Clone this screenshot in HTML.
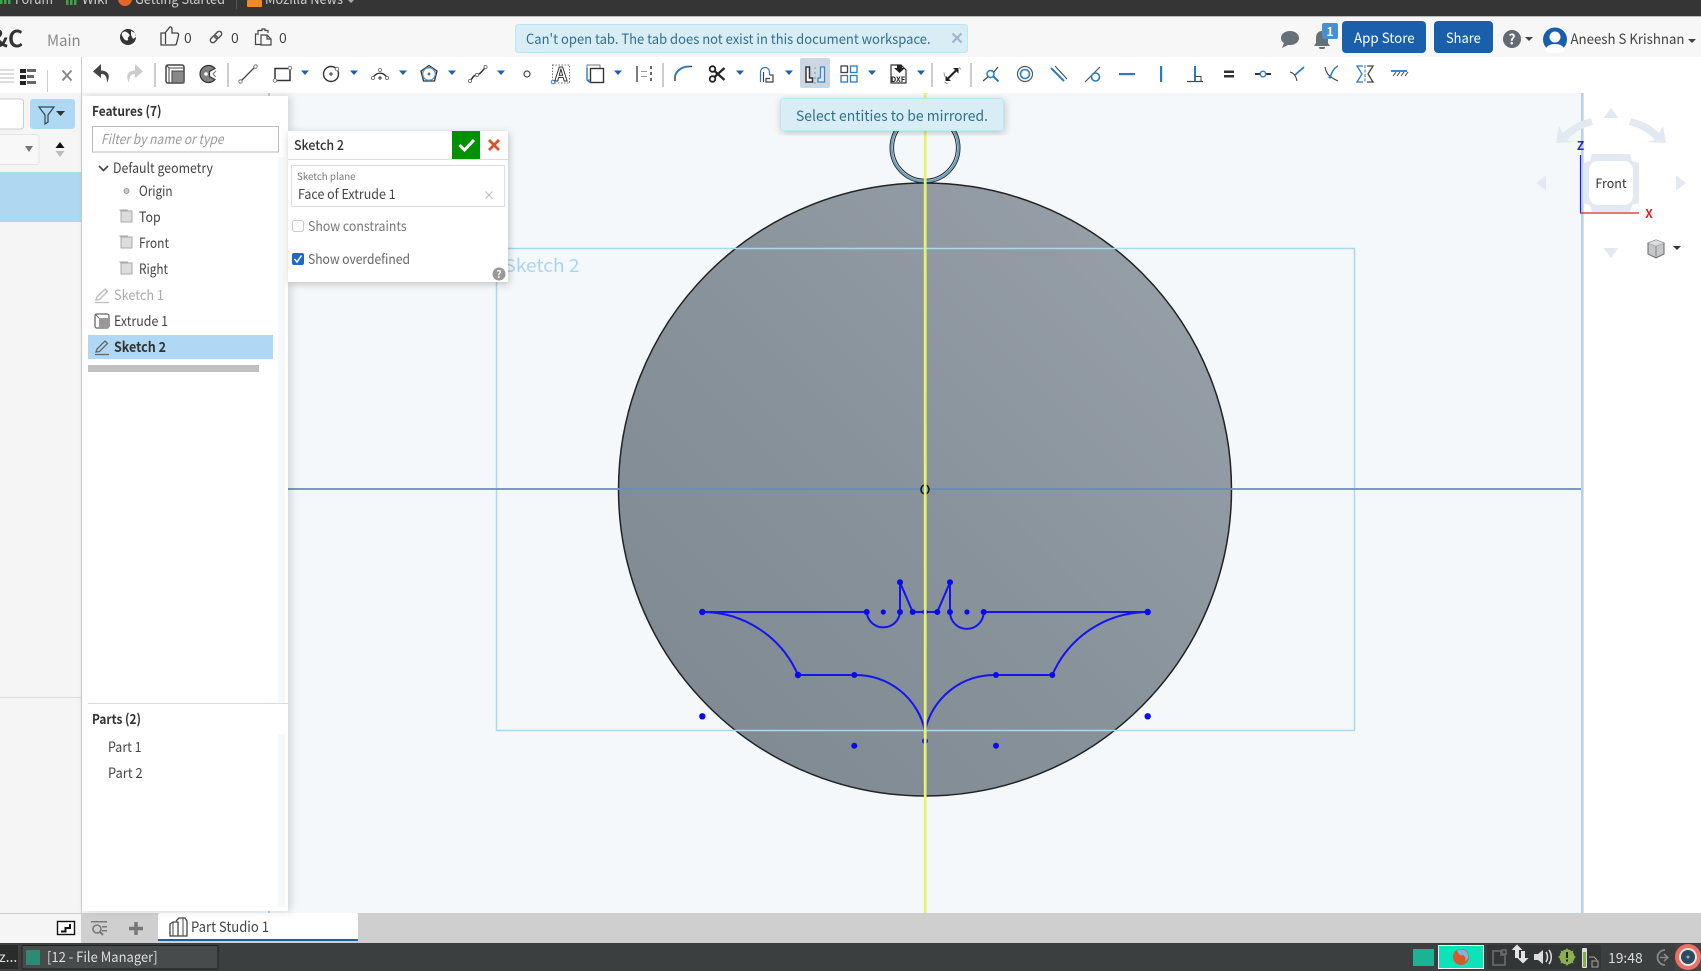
<!DOCTYPE html>
<html><head><meta charset="utf-8"><style>
html,body{margin:0;padding:0;width:1701px;height:971px;overflow:hidden;background:#fff}
svg{display:block;position:absolute;left:0;top:0}
text{font-family:"Noto Sans CJK JP","Liberation Sans",sans-serif;font-size:14px;fill:#444}
.b{font-weight:700}
.h{fill:#fff;stroke:#666;stroke-width:.8}
.car{fill:#1a5fab}
</style></head><body>
<svg width="1701" height="971" viewBox="0 0 1701 971" xmlns="http://www.w3.org/2000/svg">
<defs>
<linearGradient id="disc" x1="0.85" y1="0.15" x2="0.15" y2="0.85"><stop offset="0" stop-color="#959ea6"/><stop offset=".55" stop-color="#88929a"/><stop offset="1" stop-color="#808b93"/></linearGradient>
<filter id="sh" x="-10%" y="-10%" width="125%" height="125%"><feDropShadow dx="1" dy="2" stdDeviation="4" flood-color="#000" flood-opacity=".22"/></filter>
<filter id="sh2" x="-10%" y="-2%" width="120%" height="104%"><feDropShadow dx="3" dy="0" stdDeviation="4" flood-color="#000" flood-opacity=".14"/></filter>
</defs>

<!-- backgrounds -->
<rect width="1701" height="971" fill="#f4f8fb"/>
<rect x="1584" y="93" width="117" height="820" fill="#fff"/>
<rect width="1701" height="16" fill="#353535"/>
<rect y="16" width="1701" height="1" fill="#bbb"/>
<rect y="17" width="1701" height="40" fill="#f7f7f7"/>
<rect y="57" width="1701" height="36" fill="#fff"/>

<!-- browser bookmarks -->
<g fill="#3fa43f"><rect x="0" y="0" width="2.5" height="4"/><rect x="4" y="0" width="2.5" height="4"/><rect x="8" y="0" width="2.5" height="4"/><rect x="66" y="0" width="2.5" height="5"/><rect x="70" y="0" width="2.5" height="5"/><rect x="74" y="0" width="2.5" height="5"/></g>
<text x="15" y="4" textLength="38" lengthAdjust="spacingAndGlyphs" style="fill:#ccc">Forum</text>
<text x="82" y="4" textLength="26" lengthAdjust="spacingAndGlyphs" style="fill:#ccc">Wiki</text>
<circle cx="125" cy="-1" r="7" fill="#e3662b"/>
<text x="135" y="4" textLength="90" lengthAdjust="spacingAndGlyphs" style="fill:#ccc">Getting Started</text>
<rect x="236" y="0" width="1" height="9" fill="#555"/>
<rect x="247" y="0" width="15" height="7" rx="1" fill="#f08a24"/>
<text x="265" y="4" textLength="78" lengthAdjust="spacingAndGlyphs" style="fill:#ccc">Mozilla News</text>
<path d="M348 0h6l-3 3z" fill="#aaa"/>

<!-- canvas content -->
<rect x="268" y="93" width="2" height="820" fill="#b9d0ea"/>
<rect x="1581" y="93" width="2.5" height="820" fill="#b9d0ea"/>
<text x="504.500" y="272" textLength="75" lengthAdjust="spacingAndGlyphs" style="font-size:18px;fill:#a9d6ef">Sketch 2</text>
<circle cx="925" cy="147.8" r="34" fill="none" stroke="#222" stroke-width="3"/>
<circle cx="925" cy="147.8" r="33.6" fill="none" stroke="#6fa3c4" stroke-width="2.2"/>
<circle cx="925" cy="147.8" r="31.4" fill="none" stroke="#222" stroke-width="1"/>
<circle cx="925" cy="489.5" r="306.5" fill="url(#disc)" stroke="#222" stroke-width="1.5"/>
<rect x="496.500" y="248.5" width="858" height="482" fill="none" stroke="#a9d8f0" stroke-width="1.5"/>
<rect x="288" y="488" width="330" height="2" fill="#7b9ac2"/>
<rect x="618" y="488" width="614" height="2" fill="#6b8cb6"/>
<rect x="1232" y="488" width="349" height="2" fill="#7b9ac2"/>
<g fill="none" stroke="#1414f0" stroke-width="2">
<path d="M702.3 612H866.7A16.7 16.7 0 0 0 900 612V582.3L912.7 612H937.3L950 582.3V612A16.7 16.7 0 0 0 983.7 612H1147.7"/>
<path d="M702.3 612A104.3 104.3 0 0 1 798 675H854.3A70.7 70.7 0 0 1 925 731"/>
<path d="M1147.7 612A104.3 104.3 0 0 0 1052.3 675H996A70.7 70.7 0 0 0 925 731"/>
</g>
<g fill="#0a0af0">
<circle cx="702.3" cy="612" r="3.2"/><circle cx="866.7" cy="612" r="3"/><circle cx="883.3" cy="612" r="2.6"/><circle cx="900" cy="612" r="3"/><circle cx="900" cy="582.3" r="3"/><circle cx="912.7" cy="612" r="3"/><circle cx="925" cy="612" r="2.8"/><circle cx="937.3" cy="612" r="3"/><circle cx="950" cy="582.3" r="3"/><circle cx="950" cy="612" r="3"/><circle cx="967" cy="612" r="2.6"/><circle cx="983.7" cy="612" r="3"/><circle cx="1147.7" cy="612" r="3.2"/>
<circle cx="798" cy="675" r="3.2"/><circle cx="854.3" cy="675" r="3"/><circle cx="996" cy="675" r="3"/><circle cx="1052.3" cy="675" r="3"/>
<circle cx="702.3" cy="716.3" r="3.2"/><circle cx="1147.7" cy="716.3" r="3.2"/><circle cx="854.3" cy="745.7" r="3"/><circle cx="996" cy="745.7" r="3"/><circle cx="925" cy="741" r="3"/>
</g>
<ellipse cx="925" cy="489.5" rx="4" ry="4.500" fill="none" stroke="#111" stroke-width="1.500"/>
<rect x="923.800" y="93" width="2.800" height="820" fill="#e9f26f"/>

<!-- view cube -->
<g fill="#e2e9f0">
<path d="M1611 108l7.5 10h-15zM1611 258l-7.5-10h15zM1536 183l10-7.5v15zM1686 183l-10-7.5v15z"/>
<path d="M1591 118l2 7c-13 3-20 9-26 15l8 2-19 1 3-17 4 7c7-7 16-12 28-15z"/>
<path d="M1631 118l-2 7c13 3 20 9 26 15l-8 2 19 1-3-17-4 7c-7-7-16-12-28-15z"/>
<path d="M1592 154h38l2 7 7 2v40l-7 2-2 7h-38l-2-7-7-2v-40l7-2z"/>
</g>
<rect x="1589" y="161" width="44" height="44" rx="9" fill="#fff"/>
<text x="1611" y="188" text-anchor="middle" style="font-size:12.5px;fill:#333">Front</text>
<path d="M1580.5 155V213" stroke="#2020e0" stroke-width="1.2"/>
<path d="M1580 213H1639" stroke="#e02020" stroke-width="1.2"/>
<text x="1580.5" y="150" text-anchor="middle" class="b" style="font-size:12px;fill:#2020e0">Z</text>
<text x="1649" y="218" text-anchor="middle" class="b" style="font-size:12px;fill:#e02020">X</text>
<g transform="translate(1656,249)"><path d="M-8-6L0-9 8-6V5L0 9-8 5Z" fill="#c4c6c8" stroke="#666"/><path d="M-8-6L0-3 8-6M0-3V9" fill="none" stroke="#888"/><path d="M-8-6L0-9 8-6 0-3Z" fill="#ddd"/></g>
<path d="M1673 246h8l-4 4z" fill="#333"/>

<!-- left nav -->
<rect x="0" y="57" width="81" height="856" fill="#f5f5f5"/>
<rect x="0" y="57" width="81" height="36" fill="#fff"/>
<rect x="81" y="57" width="1" height="856" fill="#ccc"/>
<g fill="#ddd"><rect x="0" y="69" width="14" height="2"/><rect x="0" y="73" width="14" height="2"/><rect x="0" y="77" width="14" height="2"/><rect x="0" y="81" width="14" height="2"/></g>
<g fill="#222"><rect x="20" y="69" width="6" height="4"/><rect x="20" y="75" width="6" height="4"/><rect x="20" y="81" width="6" height="4"/></g>
<g fill="#666"><rect x="27" y="69" width="9" height="3"/><rect x="27" y="75" width="7" height="3"/><rect x="27" y="81" width="9" height="3"/></g>
<rect x="47" y="70" width="1" height="22" fill="#ccc"/>
<path d="M62.5 70.5l9 10M71.5 70.5l-9 10" stroke="#888" stroke-width="2"/>
<rect x="-5" y="99" width="28.5" height="30" rx="3" fill="#fff" stroke="#ccc"/>
<rect x="30" y="99" width="45" height="30" rx="3" fill="#aed9f2"/>
<path d="M39 107h15l-6 8v7l-3 2v-9z" fill="none" stroke="#345" stroke-width="1.2"/>
<path d="M56 111h9l-4.5 5z" fill="#333"/>
<rect x="-5" y="134.5" width="44" height="30" rx="3" fill="#f8f8f8" stroke="#e4e4e4"/>
<path d="M25 146h8l-4 6z" fill="#777"/>
<path d="M60 142l4.500 6h-9z" fill="#111"/><path d="M60 157l4.500-6h-9z" fill="#bbb"/>
<rect x="0" y="172" width="81" height="50" fill="#aed8f1"/>
<rect x="0" y="697" width="81" height="1" fill="#ddd"/>
<rect x="0" y="913" width="81" height="1" fill="#ccc"/>
<rect x="0" y="914" width="81" height="29" fill="#f5f5f5"/>

<!-- bottom bar -->
<rect x="81" y="913" width="1620" height="30" fill="#cfcfcf"/>
<rect x="57.500" y="921.500" width="17" height="13" fill="#fff" stroke="#111" stroke-width="1.400"/>
<path d="M61 931.500h4.500v-3.500h4.500v-4" fill="none" stroke="#111" stroke-width="2"/>
<g fill="#777"><rect x="91" y="921" width="16" height="1.500"/><rect x="102" y="926" width="5" height="1.500"/><rect x="102" y="930" width="5" height="1.500"/></g>
<circle cx="97" cy="929" r="4" fill="none" stroke="#777" stroke-width="1.600"/><path d="M100 932l3 3" stroke="#777" stroke-width="2"/>
<path d="M136 922v13M129 928.500h14" stroke="#777" stroke-width="3.500"/>
<rect x="158" y="913" width="200" height="28" rx="2" fill="#fff"/>
<rect x="158" y="939" width="200" height="2" fill="#1a5fab"/>
<path d="M170 924l3-2h5v14h-8zM176 921l3-3h6l2 3v15h-9v-14" fill="none" stroke="#444" stroke-width="1.300"/>
<path d="M173 922v14M183 918v18" stroke="#444" stroke-width="1"/>
<text x="191" y="932" textLength="78" lengthAdjust="spacingAndGlyphs" style="font-size:14.500px;fill:#444">Part Studio 1</text>

<!-- features panel -->
<rect x="82" y="96" width="206" height="815" fill="#fff" filter="url(#sh2)"/>
<rect x="278" y="157" width="7" height="546" fill="#f6f9fc"/>
<rect x="278" y="734" width="7" height="173" fill="#f6f9fc"/>
<text x="92" y="116" textLength="69.500" lengthAdjust="spacingAndGlyphs" class="b" style="font-size:13.500px;fill:#333">Features (7)</text>
<rect x="92.500" y="126.500" width="186" height="25.500" fill="#fff" stroke="#bbb"/>
<text x="101" y="144" textLength="122.500" lengthAdjust="spacingAndGlyphs" style="font-size:13.500px;font-style:italic;fill:#999">Filter by name or type</text>
<path d="M99 166l4.500 4.500 4.500-4.500" fill="none" stroke="#444" stroke-width="1.600"/>
<text x="113" y="173" textLength="100" lengthAdjust="spacingAndGlyphs">Default geometry</text>
<circle cx="126.500" cy="191" r="2.500" fill="#ccc" stroke="#888" stroke-width=".8"/>
<text x="139" y="196" textLength="33.600" lengthAdjust="spacingAndGlyphs">Origin</text>
<g fill="#dcdcdc" stroke="#aaa"><rect x="121" y="211" width="11" height="11"/><rect x="121" y="237" width="11" height="11"/><rect x="121" y="263" width="11" height="11"/></g>
<g fill="none" stroke="#aaa"><path d="M121 211l-1 -1h8"/><path d="M121 237l-1 -1h8"/><path d="M121 263l-1 -1h8"/></g>
<text x="139" y="222" textLength="21.700" lengthAdjust="spacingAndGlyphs">Top</text><text x="139" y="248" textLength="30" lengthAdjust="spacingAndGlyphs">Front</text><text x="139" y="274" textLength="29" lengthAdjust="spacingAndGlyphs">Right</text>
<g transform="translate(102,295)" fill="none" stroke="#bbb" stroke-width="1.300"><path d="M-6 5l1-3 8-8 2.500 2.500-8 8zM-7 7.500H7"/></g>
<text x="114" y="300" textLength="50" lengthAdjust="spacingAndGlyphs" style="fill:#aaa">Sketch 1</text>
<g transform="translate(102,321)"><rect x="-7" y="-7" width="14" height="14" rx="2" fill="#fff" stroke="#666" stroke-width="1.300"/><rect x="-3" y="-3" width="10" height="10" fill="#999"/><path d="M-7-7l4 4" stroke="#666"/></g>
<text x="114" y="326" textLength="54" lengthAdjust="spacingAndGlyphs">Extrude 1</text>
<rect x="88" y="335" width="185" height="24" fill="#aed8f4"/>
<g transform="translate(102,347)" fill="none" stroke="#666" stroke-width="1.300"><path d="M-6 5l1-3 8-8 2.500 2.500-8 8zM-7 7.500H7"/></g>
<text x="114" y="352" textLength="52" lengthAdjust="spacingAndGlyphs" class="b" style="fill:#333">Sketch 2</text>
<rect x="88" y="365" width="171" height="7" fill="#c0c0c0"/>
<rect x="88" y="703" width="200" height="1" fill="#d4dde4"/>
<text x="92" y="724" textLength="49" lengthAdjust="spacingAndGlyphs" class="b" style="font-size:13.500px;fill:#333">Parts (2)</text>
<text x="108" y="752" textLength="33.600" lengthAdjust="spacingAndGlyphs">Part 1</text><text x="108" y="778" textLength="34.700" lengthAdjust="spacingAndGlyphs">Part 2</text>

<!-- sketch dialog -->
<rect x="288" y="131" width="220" height="151" fill="#fff" filter="url(#sh)"/>
<text x="294" y="150" textLength="50" lengthAdjust="spacingAndGlyphs" style="font-size:13.500px;fill:#333;font-weight:500">Sketch 2</text>
<rect x="452" y="131" width="28" height="28" fill="#009100"/>
<path d="M459.500 145l5 5 9.500-10" fill="none" stroke="#fff" stroke-width="3"/>
<path d="M489 140l10 10M499 140l-10 10" stroke="#e0512b" stroke-width="2.800"/>
<rect x="288" y="159" width="220" height="1" fill="#ddd"/>
<rect x="291.500" y="165.500" width="213" height="41" fill="#fff" stroke="#ddd"/>
<text x="297" y="180" textLength="58.600" lengthAdjust="spacingAndGlyphs" style="font-size:10px;fill:#777">Sketch plane</text>
<text x="298" y="199" textLength="97.600" lengthAdjust="spacingAndGlyphs" style="font-size:13.500px;fill:#444">Face of Extrude 1</text>
<path d="M485.500 191.500l7 7M492.500 191.500l-7 7" stroke="#bbb" stroke-width="1"/>
<rect x="292.500" y="220.500" width="11" height="11" rx="2" fill="#fff" stroke="#ccc"/>
<text x="308" y="231" textLength="98.700" lengthAdjust="spacingAndGlyphs" style="font-size:13.500px;fill:#777">Show constraints</text>
<rect x="292" y="253" width="12" height="12" rx="2" fill="#1f68c4"/>
<path d="M294.500 259l2.500 3 4.500-6.500" fill="none" stroke="#fff" stroke-width="1.500"/>
<text x="308" y="264" textLength="102" lengthAdjust="spacingAndGlyphs" style="font-size:13.500px;fill:#666">Show overdefined</text>
<circle cx="499" cy="274" r="6.500" fill="#999"/>
<text x="499" y="278" text-anchor="middle" class="b" style="font-size:10px;fill:#fff">?</text>

<!-- header -->
<text x="-9" y="47" class="b" style="font-size:23px;fill:#333">&amp;C</text>
<text x="47" y="46" textLength="33.600" lengthAdjust="spacingAndGlyphs" style="font-size:15.500px;fill:#888">Main</text>
<circle cx="128" cy="37" r="8" fill="#333"/>
<path d="M122 33c3-3 5-1 7 1s-2 3-1 5-3 2-4 0-3-4-2-6zM131 31l4 2 1 4-3 2-2-4z" fill="#f7f7f7"/>
<path d="M161 33h4l4-5c1-2 3-1 3 1v4h5c1 0 2 1 1.500 2.500l-2 8c0 1-1 1.500-2 1.500h-9.500H161zM165.500 33v11" fill="none" stroke="#444" stroke-width="1.300"/>
<text x="184" y="43" style="font-size:14px">0</text>
<g transform="translate(216,37) rotate(-45)" fill="none" stroke="#555" stroke-width="1.500"><rect x="-7" y="-2.500" width="8" height="5" rx="2.500"/><rect x="-1" y="-2.500" width="8" height="5" rx="2.500"/></g>
<text x="231" y="43" style="font-size:14px">0</text>
<path d="M259 34H255.500V44.500H261M258 33V30.500H262V29H265V30.500H268V33M261 35H267L271 39V45H261ZM267 35V39H271" fill="none" stroke="#444" stroke-width="1.200"/>
<text x="279" y="43" style="font-size:14px">0</text>

<!-- notification -->
<rect x="515.500" y="24.500" width="452" height="28" rx="3" fill="#d9edf7" stroke="#bce8f1"/>
<text x="526" y="44" textLength="404.600" lengthAdjust="spacingAndGlyphs" style="font-size:14px;fill:#31708f">Can't open tab. The tab does not exist in this document workspace.</text>
<path d="M952.500 33.500l9 9M961.500 33.500l-9 9" stroke="#9db5c8" stroke-width="2"/>

<!-- header right -->
<path d="M1281 38c0-4 4-7 9-7s9 3 9 7-4 7-9 7h-2l-6 3 2-5c-2-1-3-3-3-5z" fill="#667077"/>
<path d="M1322 31c4 0 6 3 6 7v5l2 3h-16l2-3v-5c0-4 2-7 6-7zM1319 47h6c0 2-1 2-3 2s-3 0-3-2z" fill="#667077"/>
<rect x="1322" y="23" width="16" height="16" rx="2" fill="#4a90d0"/>
<text x="1330" y="36" text-anchor="middle" class="b" style="font-size:12px;fill:#fff">1</text>
<rect x="1342" y="21" width="84" height="32" rx="4" fill="#1a5fab"/>
<text x="1354" y="43" textLength="60.700" lengthAdjust="spacingAndGlyphs" style="font-size:14px;fill:#fff">App Store</text>
<rect x="1434" y="21" width="59" height="32" rx="4" fill="#1a5fab"/>
<text x="1446" y="43" textLength="34.700" lengthAdjust="spacingAndGlyphs" style="font-size:14px;fill:#fff">Share</text>
<circle cx="1512" cy="39" r="9" fill="#5f6b75"/>
<text x="1512" y="44.500" text-anchor="middle" class="b" style="font-size:14px;fill:#fff">?</text>
<path d="M1525 37h8l-4 4z" fill="#444"/>
<circle cx="1555" cy="39.500" r="12" fill="#1a5fab"/>
<circle cx="1555" cy="37" r="5.500" fill="#fff"/><path d="M1545 51c1-5 5-7 10-7s9 2 10 7c-3 2-6 2-10 2s-7 0-10-2z" fill="#fff"/>
<text x="1570.500" y="44" textLength="114" lengthAdjust="spacingAndGlyphs" style="font-size:14px;fill:#444">Aneesh S Krishnan</text>
<path d="M1688 39h8l-4 4z" fill="#444"/>

<!-- toolbar separators -->
<g fill="#ccc"><rect x="154" y="63" width="2" height="24"/><rect x="227" y="63" width="2" height="24"/><rect x="662" y="63" width="2" height="24"/><rect x="931" y="63" width="2" height="24"/><rect x="970" y="63" width="2" height="24"/></g>

<!-- toolbar icons -->
<path d="M101 64l-8 7.500 8 6.500v-4c4 0 6 2 6 9 3-6 3-12-6-12.500z" fill="#444"/>
<path d="M135 64l8 7.500-8 6.500v-4c-4 0-6 2-6 9-3-6-3-12 6-12.500z" fill="#ccc"/>
<g transform="translate(175,74)"><rect x="-9" y="-9" width="18" height="18" rx="2" fill="#fff" stroke="#444" stroke-width="1.500"/><path d="M-9-9l3 3h15M-6-6v15" fill="none" stroke="#444"/><rect x="-3" y="-3" width="12" height="12" fill="#888" stroke="#444"/></g>
<g transform="translate(208,74)"><path d="M7-5.500A8.500 8.500 0 1 0 7 5.500L1.500 2.500V-2.500Z" fill="#808080" stroke="#333" stroke-width="1.200"/><circle cx="-2" cy="0" r="1.800" fill="#fff"/><path d="M8-3l-3 3 3 3" fill="none" stroke="#777"/></g>
<g transform="translate(248,74)"><path d="M-7 7L7-7" stroke="#444" stroke-width="1.300"/><circle cx="-7.500" cy="7.500" r="1.700" class="h"/><circle cx="7.500" cy="-7.500" r="1.700" class="h"/></g>
<g transform="translate(282,74)"><rect x="-7" y="-5.500" width="15" height="12" fill="none" stroke="#333" stroke-width="1.500"/><circle cx="-7" cy="6.500" r="1.800" class="h"/><circle cx="8" cy="-6" r="1.800" class="h"/></g>
<g transform="translate(331,74)"><circle r="7.500" fill="none" stroke="#333" stroke-width="1.400"/><path d="M-2 0h4M0-2v4" stroke="#333"/><circle cx="6" cy="-5" r="1.800" class="h"/></g>
<g transform="translate(380,74)"><path d="M-7 4A7.500 7.500 0 0 1 7 4" fill="none" stroke="#333" stroke-width="1.400"/><path d="M-2 4h4M0 2v4" stroke="#333"/><circle cx="-7" cy="4" r="1.600" class="h"/><circle cx="7" cy="4" r="1.600" class="h"/><circle cx="0" cy="-4" r="1.500" class="h"/></g>
<g transform="translate(429,74)"><path d="M0-8.500L8-3 5.500 7h-11L-8-3z" fill="none" stroke="#333" stroke-width="1.300"/><circle r="6.300" fill="none" stroke="#4c8fd0" stroke-width="1.300"/><path d="M-1.500 0h3M0-1.500v3" stroke="#333"/></g>
<g transform="translate(478,74)"><path d="M-7 6C-4 0-1 1 1 0S4-3 7-6" fill="none" stroke="#333" stroke-width="1.500"/><circle cx="-8" cy="7" r="1.600" class="h"/><circle cx="-1" cy="1" r="1.600" class="h"/><circle cx="7.500" cy="-7" r="1.600" class="h"/></g>
<circle cx="527" cy="74" r="3" fill="none" stroke="#444" stroke-width="1.200"/>
<g transform="translate(561,74)"><rect x="-8.500" y="-9" width="17" height="18" fill="none" stroke="#777" stroke-width="1" stroke-dasharray="1.500 1.500"/><text x="0" y="7" text-anchor="middle" style="font-size:19px;fill:#fff;stroke:#333;stroke-width:1;font-weight:700">A</text><circle cx="-8" cy="8" r="1.800" fill="#fff" stroke="#2a7bc4"/></g>
<g transform="translate(595,74)"><rect x="-8" y="-9" width="13" height="15" fill="none" stroke="#777" stroke-width="1"/><rect x="-4.500" y="-5.500" width="13" height="14" fill="#fff" stroke="#333" stroke-width="1.400"/><path d="M-8-6v12M-8 6l3.500 2.500" fill="none" stroke="#2a7bc4" stroke-width="1.400"/></g>
<g transform="translate(644,74)"><path d="M-7-8V8" stroke="#444" stroke-width="1.400"/><path d="M7-8V8" stroke="#444" stroke-width="1.600" stroke-dasharray="3 3"/><path d="M-3-2.500H3M-3 2.500H3" stroke="#999"/></g>
<path d="M675 76.500C676 71 682 66.500 689 66.500" fill="none" stroke="#2a7bc4" stroke-width="2"/><path d="M675 76.500v4.500" stroke="#444" stroke-width="1.500"/><path d="M689 66.500h3" stroke="#444" stroke-width="1.500"/>
<g transform="translate(717,74)" fill="none" stroke="#222" stroke-width="1.800"><circle cx="-4.500" cy="-5" r="2.800"/><circle cx="-4.500" cy="5" r="2.800"/><path d="M-2.500-3L7.500 6M-2.500 3L7.500-6" stroke-width="2.200"/></g>
<g fill="none" stroke-width="1.200"><path d="M760.500 82V72a4.500 4.500 0 0 1 9 0V75" stroke="#2a7bc4"/><path d="M763.500 82V72M769.500 75H773V82H766V78.500H770" stroke="#444"/></g>
<rect x="800" y="58" width="30" height="30" rx="2" fill="#cbd8e3"/>
<path d="M806 67h3.500v11h3v4H806z" fill="#fff" stroke="#333" stroke-width="1.500"/>
<path d="M824.500 67v15h-6.500v-4h2.500V67z" fill="#e4ecf3" stroke="#3a86c8" stroke-width="1.300"/>
<path d="M815 67v17" stroke="#7a9ab5" stroke-dasharray="2 3" stroke-width="1"/>
<g fill="none" stroke="#2a7bc4" stroke-width="1.300" transform="translate(849,74)"><rect x="-8" y="-8" width="6.500" height="6.500" stroke="#444"/><rect x="1.500" y="-8" width="6.500" height="6.500"/><rect x="-8" y="1.500" width="6.500" height="6.500"/><rect x="1.500" y="1.500" width="6.500" height="6.500"/></g>
<g transform="translate(898,74)"><path d="M-7-9H3L8-4V9H-7Z" fill="#fff" stroke="#333" stroke-width="1.200"/><path d="M-2-9h5v3h3l-5.500 5-5.500-5H-2z" fill="#222" transform="translate(1,0)"/><text x="0" y="8" text-anchor="middle" class="b" style="font-size:7.500px;fill:#222">DXF</text></g>
<g transform="translate(952,74.500)"><path d="M-4 4L4-4" stroke="#222" stroke-width="2"/><path d="M-6.500 6.500v-5.500l5.500 5.500zM6.500-6.500v5.500l-5.500-5.500z" fill="#222"/><path d="M-7.500 2l-.500-4M7-7l2 2M-7.500 7.500l3 2" stroke="#777" stroke-width=".8"/></g>
<g class="car"><path d="M301 70.500h8l-4 4.500zM350 70.500h8l-4 4.500zM399 70.500h8l-4 4.500zM448 70.500h8l-4 4.500zM497 70.500h8l-4 4.500zM614 70.500h8l-4 4.500zM736 70.500h8l-4 4.500zM785 70.500h8l-4 4.500zM868 70.500h8l-4 4.500zM917 70.500h8l-4 4.500z"/></g>

<!-- constraint icons -->
<g transform="translate(991,74)"><path d="M-8 7L-2 2M3-2L7-7" stroke="#444" stroke-width="1.200"/><circle r="3.500" cx="-.500" cy="0" fill="none" stroke="#2a7bc4" stroke-width="1.500"/><path d="M2 2L7.500 7.500" stroke="#2a7bc4" stroke-width="2"/></g>
<g transform="translate(1025,74)"><circle r="7.500" fill="none" stroke="#555" stroke-width="1.200"/><circle r="4.500" fill="none" stroke="#2a7bc4" stroke-width="1.600"/></g>
<g transform="translate(1059,74)"><path d="M-8-6L5 7" stroke="#2a7bc4" stroke-width="2"/><path d="M-4-8L8 5" stroke="#444" stroke-width="1"/></g>
<g transform="translate(1093,74)"><path d="M-8 8L7-7" stroke="#555" stroke-width="1.200"/><circle cx="2.500" cy="3" r="4" fill="none" stroke="#2a7bc4" stroke-width="1.600"/></g>
<rect x="1119" y="73" width="16" height="2.200" fill="#2a7bc4"/>
<rect x="1160" y="66" width="2.200" height="16" fill="#2a7bc4"/>
<g transform="translate(1195,74)"><path d="M-8 7.500H8" stroke="#444" stroke-width="1.200"/><path d="M0-8V7" stroke="#2a7bc4" stroke-width="2"/><path d="M0 2.500H6V7" fill="none" stroke="#444" stroke-width="1"/></g>
<g fill="#333"><rect x="1224" y="70.500" width="10" height="2.500"/><rect x="1224" y="75" width="10" height="2.500"/></g>
<g transform="translate(1263,74)"><path d="M-8 0H-3M3 0H8" stroke="#333" stroke-width="2"/><circle r="2.800" fill="#fff" stroke="#2a7bc4" stroke-width="1.300"/></g>
<g transform="translate(1297,74)"><path d="M-7-2C-3-1-1 2 0 7" fill="none" stroke="#444" stroke-width="1.100"/><path d="M-2 1L7-7" stroke="#2a7bc4" stroke-width="1.800"/></g>
<g transform="translate(1331,74)"><path d="M-6-7C-5-1-2 3 7 7" fill="none" stroke="#444" stroke-width="1.100"/><path d="M-1 3C1-2 3-6 7-8" fill="none" stroke="#2a7bc4" stroke-width="1.500"/><circle cx="-1" cy="3" r="1.500" fill="#2a7bc4"/></g>
<g transform="translate(1365,74)"><path d="M-2-8H-8L-3 0-8 8H-2" fill="none" stroke="#2a7bc4" stroke-width="1.300"/><path d="M2-8H8L3 0 8 8H2" fill="none" stroke="#444" stroke-width="1.300"/><path d="M0-9V9" stroke="#2a7bc4" stroke-width="1" stroke-dasharray="3 1.500"/></g>
<g transform="translate(1399,74)"><path d="M-8-3H8" stroke="#2a7bc4" stroke-width="1.800"/><path d="M-6 2l3-4M-2 2l3-4M2 2l3-4M6 2l3-4" stroke="#444" stroke-width="1"/></g>

<!-- tooltip -->
<rect x="780.500" y="98.500" width="223" height="32" rx="3" fill="#d9edf7" stroke="#bce8f1" filter="url(#sh)"/>
<text x="796" y="121" textLength="192" lengthAdjust="spacingAndGlyphs" style="font-size:14.500px;fill:#31708f">Select entities to be mirrored.</text>

<!-- taskbar -->
<rect y="943" width="1701" height="28" fill="#3c3f3f"/>
<rect x="0" y="945" width="18" height="24" fill="#2a2c2c"/>
<text x="-1" y="962" style="font-size:14px;fill:#ddd">z...</text>
<rect x="22" y="945.500" width="196" height="23.500" rx="1" fill="#474b4b" stroke="#222"/>
<rect x="26" y="950" width="14" height="15" fill="#2f8a74"/>
<text x="47" y="962" textLength="110.600" lengthAdjust="spacingAndGlyphs" style="font-size:14px;fill:#ddd">[12 - File Manager]</text>
<rect x="1413" y="949" width="21" height="17" fill="#1ab394"/>
<rect x="1438.500" y="945.500" width="45" height="23" fill="#0be3b8" stroke="#fff"/>
<circle cx="1461" cy="957" r="8" fill="#d9572b"/><path d="M1457 951c4-3 9-1 11 3 1 3 0 6-3 7 1-3 0-5-2-6-2 1-4 0-6-4z" fill="#7fb4dc"/>
<rect x="1487" y="945" width="114" height="24" fill="#333636"/>
<path d="M1493 951h8v4h4v10h-12zM1502 950h4v4h-4z" fill="none" stroke="#666" stroke-width="1.800"/>
<path d="M1515 958v-8h-3.500l5.500-5.500 5.500 5.500h-3.500v8zM1521 951h4v7h3.500l-5.500 5.500-5.500-5.500h3.500z" fill="#e4e4e4"/>
<path d="M1534 954h4l5-4v14l-5-4h-4z" fill="#ddd"/><path d="M1546 952c2 3 2 7 0 10M1549 950c3 4 3 10 0 14" fill="none" stroke="#ddd" stroke-width="1.500"/>
<g transform="translate(1567,957)"><circle r="7.500" fill="#8ab04c"/><path d="M-9 0L-6-2V2ZM9 0L6-2V2ZM0-9L-2-6H2ZM0 9L-2 6H2ZM-6.500-6.500L-5-2.500-2.500-5ZM6.500-6.500L2.500-5 5-2.500ZM-6.500 6.500L-2.500 5-5 2.500ZM6.500 6.500L5 2.500 2.500 5Z" fill="#8ab04c"/><rect x="-1" y="-5" width="2" height="6" fill="#222"/><rect x="-1" y="2.500" width="2" height="2" fill="#222"/></g>
<rect x="1582" y="948" width="5" height="20" rx="1" fill="#dde"/><rect x="1583" y="952" width="3" height="15" fill="#7cb342"/>
<path d="M1589 957h5l3 3M1592 961h6v6h-6z" fill="none" stroke="#aaa" stroke-width="1"/>
<text x="1608" y="963" textLength="34.700" lengthAdjust="spacingAndGlyphs" style="font-size:14px;fill:#ddd">19:48</text>
<path d="M1665 950a7.500 7.500 0 1 0 0 15" fill="none" stroke="#888" stroke-width="1.800"/><path d="M1660 957.500h7M1664 954l4 3.500-4 3.500" fill="none" stroke="#888" stroke-width="1.500"/>
<rect x="1675" y="944" width="26" height="27" fill="#444"/>
<circle cx="1688" cy="957" r="13" fill="#ee7060"/>
<circle cx="1688" cy="957" r="9" fill="#dfe6ea"/><circle cx="1688" cy="957" r="7" fill="#2c4a5c"/><circle cx="1688" cy="957" r="1.500" fill="#9ab"/>
</svg>
</body></html>
